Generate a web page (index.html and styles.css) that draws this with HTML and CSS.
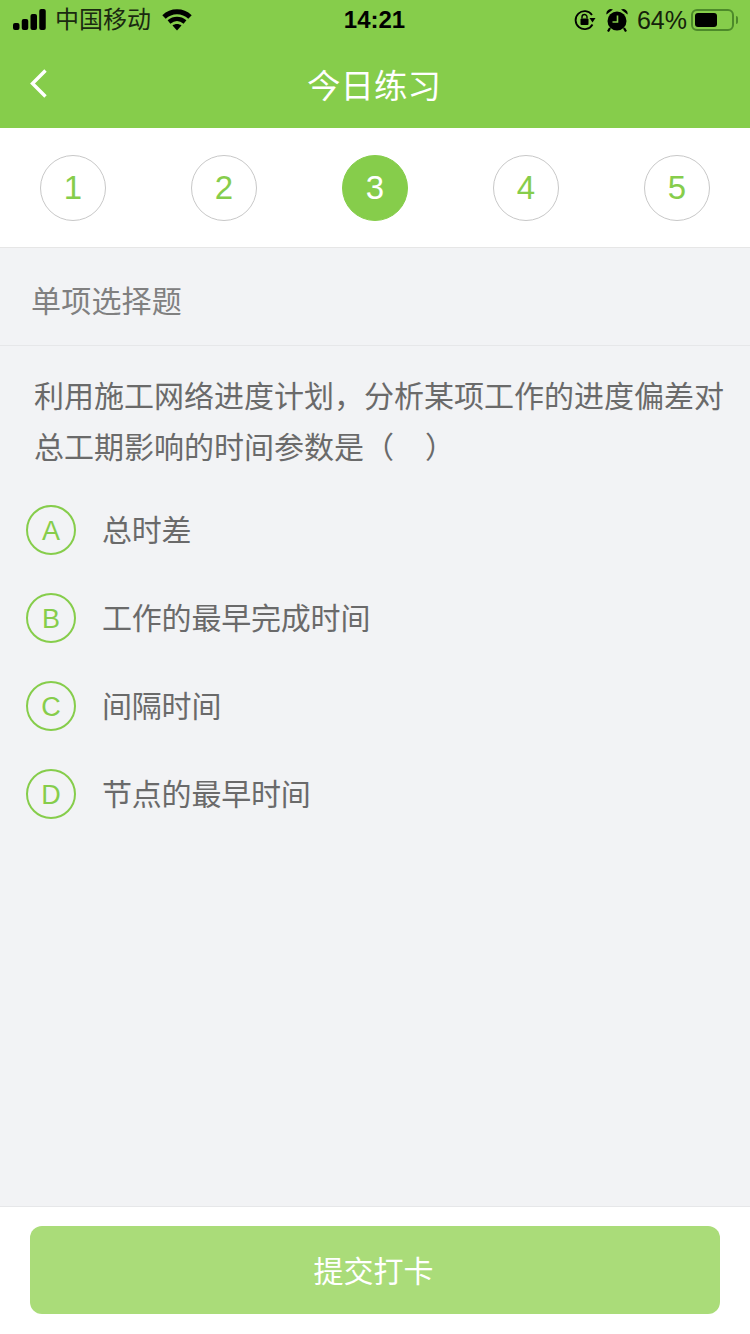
FILE: index.html
```html
<!DOCTYPE html>
<html lang="zh-CN">
<head>
    <meta charset="UTF-8">
    <meta name="viewport" content="width=device-width, initial-scale=1.0">
    <title>今日练习</title>
    <link rel="stylesheet" href="styles.css">
</head>
<body>
    <div class="page">
        <!-- 顶部绿色区域 -->
        <div class="top-bar">
            <div class="status-bar">
                <div class="status-left">
                    <svg class="signal" width="33" height="22" viewBox="0 0 33 22">
                        <rect x="0" y="14" width="6.500" height="7" rx="2"/>
                        <rect x="8.750" y="10" width="6.500" height="11" rx="2"/>
                        <rect x="17.500" y="5" width="6.500" height="16" rx="2"/>
                        <rect x="26.250" y="0" width="6.500" height="21" rx="2"/>
                    </svg>
                    <span class="carrier">中国移动</span>
                    <svg class="wifi" width="30" height="22" viewBox="0 0 30 22">
                        <path d="M2 8C9.500 1 20.500 1 28 8" fill="none" stroke="#000" stroke-width="5"/>
                        <path d="M7 13C12 9 18 9 23 13" fill="none" stroke="#000" stroke-width="4.500"/>
                        <path d="M10.500 16.500C13 14.500 17 14.500 19.500 16.500L15 21.500Z" fill="#000"/>
                    </svg>
                </div>
                <span class="clock">14:21</span>
                <div class="status-right">
                    <svg class="lock" width="22" height="22" viewBox="0 0 22 22">
                        <path d="M18 6A9 9 0 1 0 18.500 15.500" fill="none" stroke="#000" stroke-width="1.800"/>
                        <path d="M15.500 9H21.500L18.500 13.500Z" fill="#000"/>
                        <rect x="6.500" y="9.500" width="8" height="6.500" rx="1" fill="#000"/>
                        <path d="M8 9.500V8a2.500 2.500 0 0 1 5 0V9.500" fill="none" stroke="#000" stroke-width="1.400"/>
                    </svg>
                    <svg class="alarm" width="22" height="24" viewBox="0 0 22 24">
                        <circle cx="11" cy="13" r="9.500"/>
                        <path d="M0.500 6.500A4.500 4.500 0 0 1 7 1.500ZM21.500 6.500A4.500 4.500 0 0 0 15 1.500Z"/>
                        <path d="M4 20L2 23.500M18 20L20 23.500" stroke="#000" stroke-width="2.200"/>
                        <path d="M11.500 7.500V14H6.500" fill="none" stroke="#86cd4b" stroke-width="1.600"/>
                    </svg>
                    <span class="percent">64%</span>
                    <div class="battery"><div class="battery-level" style="width: 64%"></div></div>
                    <div class="battery-cap"></div>
                </div>
            </div>
            <div class="nav-bar">
                <svg class="back" width="20" height="32" viewBox="0 0 20 32">
                    <path d="M16.500 2.500L3.500 15.500L16.500 28.500" fill="none" stroke="#fff" stroke-width="3.400"/>
                </svg>
                <h1>今日练习</h1>
            </div>
        </div>

        <!-- 题号 -->
        <div class="steps">
            <div class="step">1</div>
            <div class="step">2</div>
            <div class="step active">3</div>
            <div class="step">4</div>
            <div class="step">5</div>
        </div>

        <div class="content">
            <div class="type-title">单项选择题</div>
            <p class="question">利用施工网络进度计划，分析某项工作的进度偏差对总工期影响的时间参数是（&nbsp;&nbsp;&nbsp;&thinsp;）</p>
            <div class="options">
                <div class="option"><span class="letter">A</span><span class="option-text">总时差</span></div>
                <div class="option"><span class="letter">B</span><span class="option-text">工作的最早完成时间</span></div>
                <div class="option"><span class="letter">C</span><span class="option-text">间隔时间</span></div>
                <div class="option"><span class="letter">D</span><span class="option-text">节点的最早时间</span></div>
            </div>
        </div>

        <div class="footer">
            <button class="submit-btn">提交打卡</button>
        </div>
    </div>
</body>
</html>
```

FILE: styles.css
```css
* {
    box-sizing: border-box;
}

body {
    margin: 0;
    font-family: "Liberation Sans", "Noto Sans CJK SC", sans-serif;
    background-color: #f2f3f5;
}

.page {
    display: flex;
    flex-direction: column;
    width: 750px;
    height: 1334px;
    overflow: hidden;
}

.top-bar {
    height: 128px;
    background-color: #86cd4b;
}

.status-bar {
    display: flex;
    align-items: center;
    justify-content: space-between;
    height: 40px;
    padding: 0 12px 0 13px;
    position: relative;
}

.status-left {
    display: flex;
    align-items: center;
}

.signal {
    fill: #000;
    margin-right: 9px;
}

.carrier {
    font-size: 24px;
    line-height: 30px;
    color: #1a2a10;
    margin-right: 11px;
}

.clock {
    position: absolute;
    left: 0;
    right: 1px;
    text-align: center;
    font-size: 24px;
    font-weight: bold;
    color: #000;
}

.status-right {
    display: flex;
    align-items: center;
}

.lock {
    margin-right: 10px;
}

.alarm {
    margin-right: 9px;
}

.percent {
    font-size: 25px;
    color: #14210a;
    margin-right: 4px;
}

.battery {
    width: 43px;
    height: 22px;
    border: 2px solid #4d8a2a;
    border-radius: 6px;
    padding: 2px;
}

.battery-level {
    height: 100%;
    background-color: #000;
    border-radius: 3px;
}

.battery-cap {
    width: 2px;
    height: 8px;
    margin-left: 2px;
    background-color: #4d8a2a;
    border-radius: 0 2px 2px 0;
}

.nav-bar {
    display: flex;
    align-items: center;
    justify-content: center;
    height: 88px;
    position: relative;
}

.back {
    position: absolute;
    left: 29px;
    top: 28px;
}

.nav-bar h1 {
    margin: 0;
    padding: 0 2px 2px 0;
    font-size: 33.500px;
    font-weight: normal;
    color: #fff;
}

.steps {
    display: flex;
    justify-content: space-between;
    align-items: center;
    height: 120px;
    padding: 0 40px;
    background-color: #fff;
    border-bottom: 1px solid #e6e6e6;
}

.step {
    display: flex;
    align-items: center;
    justify-content: center;
    width: 66px;
    height: 66px;
    border: 1px solid #c8c8c8;
    border-radius: 50%;
    font-size: 33px;
    color: #86cd4b;
}

.step.active {
    background-color: #86cd4b;
    border-color: #86cd4b;
    color: #fff;
}

.content {
    flex: 1;
}

.type-title {
    height: 98px;
    padding-left: 31px;
    line-height: 108px;
    font-size: 30px;
    letter-spacing: 0.200px;
    color: #808080;
    border-bottom: 1px solid #e6e7e9;
}

.question {
    margin: 0;
    padding: 25px 20px 0 34px;
    font-size: 30px;
    line-height: 51px;
    color: #6a6a6a;
}

.options {
    padding: 13px 26px 0;
}

.option {
    display: flex;
    align-items: center;
    height: 88px;
}

.letter {
    display: flex;
    align-items: center;
    justify-content: center;
    width: 50px;
    height: 50px;
    margin-right: 26px;
    padding-top: 2px;
    border: 2px solid #86cd4b;
    border-radius: 50%;
    font-size: 27px;
    color: #86cd4b;
}

.option-text {
    padding-bottom: 4px;
    font-size: 30px;
    letter-spacing: -0.200px;
    color: #6a6a6a;
}

.footer {
    height: 128px;
    padding: 19px 30px 0;
    background-color: #fff;
    border-top: 1px solid #e6e7e9;
}

.submit-btn {
    display: block;
    width: 100%;
    height: 88px;
    padding: 0 3px 2px 0;
    border: none;
    border-radius: 12px;
    background-color: #aadc79;
    color: #fff;
    font-family: inherit;
    font-size: 30px;
}
```
